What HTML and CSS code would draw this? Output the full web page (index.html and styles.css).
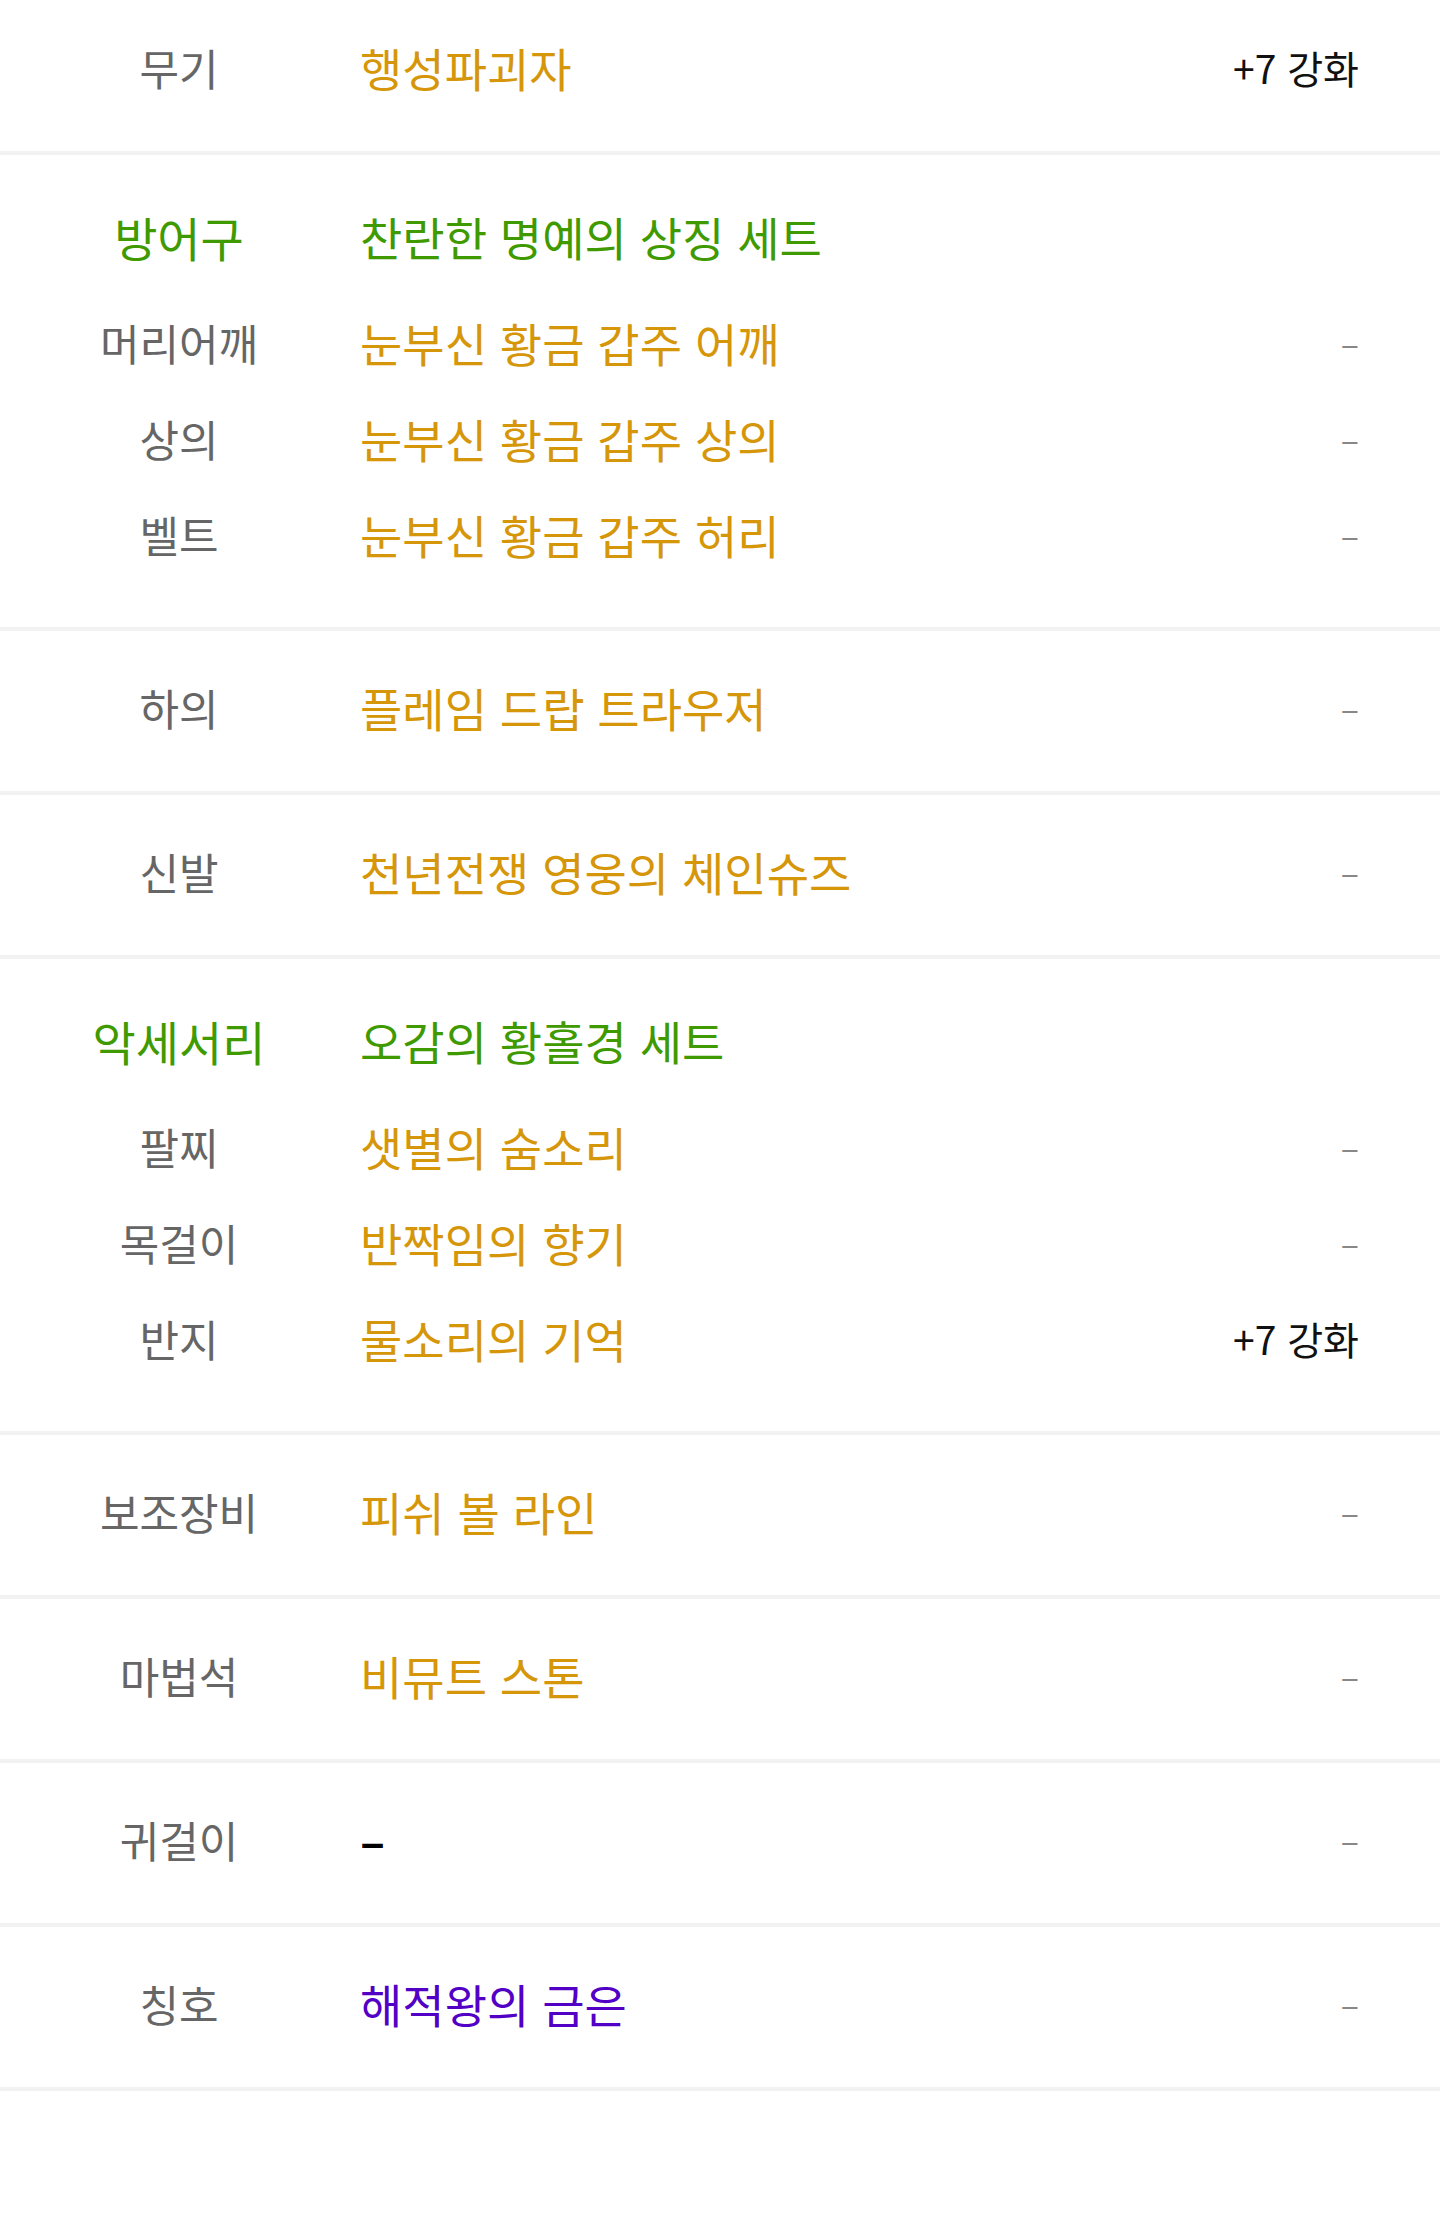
FILE: index.html
```html
<!DOCTYPE html>
<html lang="ko">
<head>
    <meta charset="UTF-8">
    <meta name="viewport" content="width=device-width, initial-scale=1.0">
    <title>장착 장비</title>
    <link rel="stylesheet" href="styles.css">
</head>
<body>
    <div class="equip-list">
        <div class="row">
            <span class="slot">무기</span>
            <span class="item">행성파괴자</span>
            <span class="reinforce">+7 강화</span>
        </div>

        <div class="set">
            <div class="set-head">
                <span class="slot">방어구</span>
                <span class="item">찬란한 명예의 상징 세트</span>
            </div>
            <div class="set-row">
                <span class="slot">머리어깨</span>
                <span class="item">눈부신 황금 갑주 어깨</span>
                <span class="none">–</span>
            </div>
            <div class="set-row">
                <span class="slot">상의</span>
                <span class="item">눈부신 황금 갑주 상의</span>
                <span class="none">–</span>
            </div>
            <div class="set-row">
                <span class="slot">벨트</span>
                <span class="item">눈부신 황금 갑주 허리</span>
                <span class="none">–</span>
            </div>
        </div>

        <div class="row">
            <span class="slot">하의</span>
            <span class="item">플레임 드랍 트라우저</span>
            <span class="none">–</span>
        </div>

        <div class="row">
            <span class="slot">신발</span>
            <span class="item">천년전쟁 영웅의 체인슈즈</span>
            <span class="none">–</span>
        </div>

        <div class="set">
            <div class="set-head">
                <span class="slot">악세서리</span>
                <span class="item">오감의 황홀경 세트</span>
            </div>
            <div class="set-row">
                <span class="slot">팔찌</span>
                <span class="item">샛별의 숨소리</span>
                <span class="none">–</span>
            </div>
            <div class="set-row">
                <span class="slot">목걸이</span>
                <span class="item">반짝임의 향기</span>
                <span class="none">–</span>
            </div>
            <div class="set-row">
                <span class="slot">반지</span>
                <span class="item">물소리의 기억</span>
                <span class="reinforce">+7 강화</span>
            </div>
        </div>

        <div class="row">
            <span class="slot">보조장비</span>
            <span class="item">피쉬 볼 라인</span>
            <span class="none">–</span>
        </div>

        <div class="row">
            <span class="slot">마법석</span>
            <span class="item">비뮤트 스톤</span>
            <span class="none">–</span>
        </div>

        <div class="row">
            <span class="slot">귀걸이</span>
            <span class="item empty">–</span>
            <span class="none">–</span>
        </div>

        <div class="row">
            <span class="slot">칭호</span>
            <span class="item title">해적왕의 금은</span>
            <span class="none">–</span>
        </div>
    </div>
</body>
</html>
```

FILE: styles.css
```css
body {
    margin: 0;
    background: #fff;
    font-family: "Noto Sans CJK KR", "Noto Sans", sans-serif;
    overflow: hidden;
}
.equip-list {
    margin-top: -9px;
}
.row,
.set-head,
.set-row {
    display: flex;
    align-items: center;
    box-sizing: border-box;
    padding: 0 81px 8px 70px;
}
.row {
    height: 164px;
    border-bottom: 4px solid #f2f2f2;
}
.set {
    padding: 37px 0 41px;
    border-bottom: 4px solid #f2f2f2;
}
.set-head {
    height: 96px;
    margin-bottom: 10px;
}
.set-row {
    height: 96px;
}
.slot {
    width: 218px;
    flex-shrink: 0;
    margin-right: 72px;
    text-align: center;
    font-size: 43px;
    color: #666;
}
.item {
    flex: 1;
    font-size: 46px;
    color: #d6960a;
}
.set-head .slot {
    font-size: 47px;
}
.set-head .slot,
.set-head .item {
    color: #3f9a00;
}
.item.title {
    color: #5300c6;
}
.item.empty {
    color: #000;
    font-weight: 700;
}
.reinforce {
    font-size: 39px;
    color: #111;
}
.none {
    font-size: 34px;
    color: #888;
}
```
